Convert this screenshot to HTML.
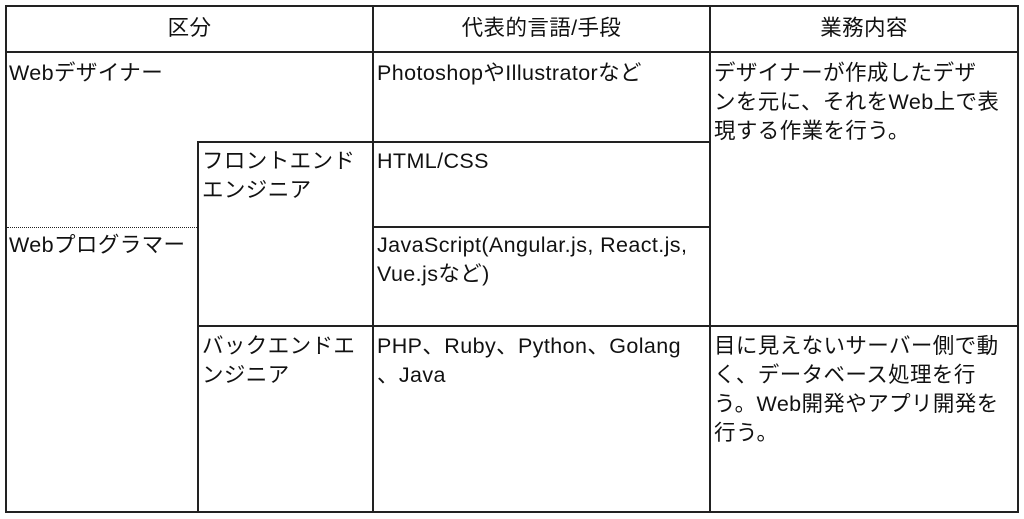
<!DOCTYPE html>
<html><head><meta charset="utf-8"><style>
body{margin:0;width:1024px;height:519px;background:#fff;position:relative;overflow:hidden;font-family:"Liberation Sans","Noto Sans CJK JP",sans-serif;color:#111;font-size:21.5px;}
.h,.v{position:absolute;background:#222}
.h{height:2px}.v{width:2px}
.t{position:absolute;line-height:29px;white-space:nowrap;letter-spacing:0.4px}
.c{text-align:center}
</style></head><body>
<div class="h" style="left:5px;top:5px;width:1014px"></div>
<div class="h" style="left:5px;top:51px;width:1014px"></div>
<div class="h" style="left:5px;top:511px;width:1014px"></div>
<div class="v" style="left:5px;top:5px;height:508px"></div>
<div class="v" style="left:372px;top:5px;height:508px"></div>
<div class="v" style="left:709px;top:5px;height:508px"></div>
<div class="v" style="left:1017px;top:5px;height:508px"></div>
<div class="v" style="left:197px;top:141px;height:372px"></div>
<div class="h" style="left:197px;top:141px;width:514px"></div>
<div class="h" style="left:372px;top:226px;width:339px"></div>
<div style="position:absolute;left:7px;top:227px;width:190px;border-top:1px dotted #222"></div>
<div class="h" style="left:197px;top:325px;width:822px"></div>

<div class="t c" style="left:7px;width:365px;top:14px">区分</div>
<div class="t c" style="left:374px;width:335px;top:14px">代表的言語/手段</div>
<div class="t c" style="left:711px;width:306px;top:14px">業務内容</div>

<div class="t" style="left:9px;top:59px">Webデザイナー</div>
<div class="t" style="left:9px;top:231px">Webプログラマー</div>
<div class="t" style="left:202px;top:147px">フロントエンド<br>エンジニア</div>
<div class="t" style="left:202px;top:332px">バックエンドエ<br>ンジニア</div>
<div class="t" style="left:377px;top:59px">PhotoshopやIllustratorなど</div>
<div class="t" style="left:377px;top:147px">HTML/CSS</div>
<div class="t" style="left:377px;top:231px">JavaScript(Angular.js, React.js,<br>Vue.jsなど)</div>
<div class="t" style="left:377px;top:332px">PHP、Ruby、Python、Golang<br>、Java</div>
<div class="t" style="left:714px;top:59px">デザイナーが作成したデザ<br>ンを元に、それをWeb上で表<br>現する作業を行う。</div>
<div class="t" style="left:714px;top:332px">目に見えないサーバー側で動<br>く、データベース処理を行<br>う。Web開発やアプリ開発を<br>行う。</div>
</body></html>
